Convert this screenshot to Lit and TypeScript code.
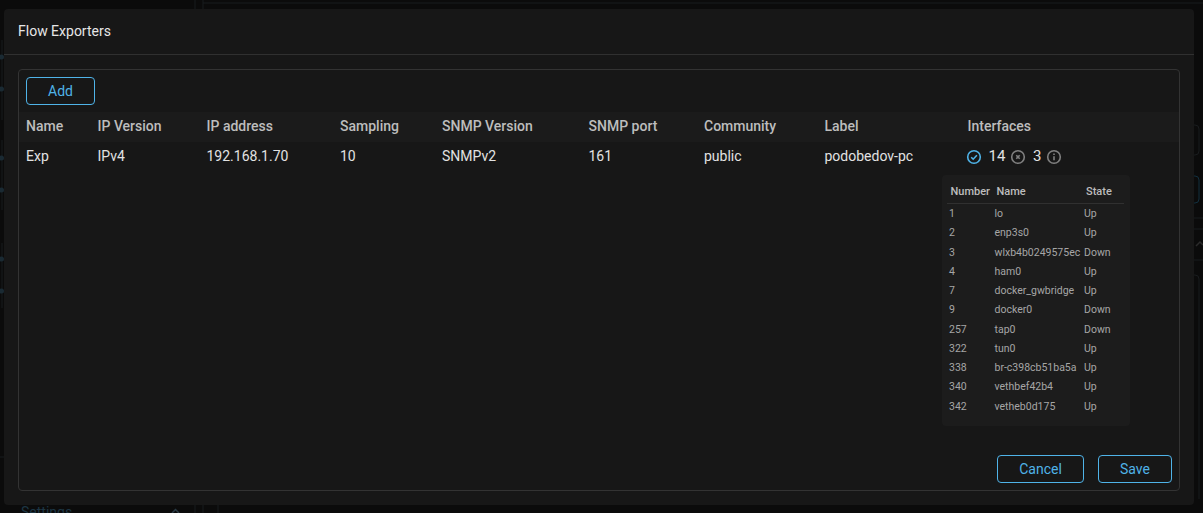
import { LitElement, html, css, svg } from "lit";
import { customElement } from "lit/decorators.js";

const HEAD = ["Name", "IP Version", "IP address", "Sampling", "SNMP Version", "SNMP port", "Community", "Label", "Interfaces"];
const ROW = ["Exp", "IPv4", "192.168.1.70", "10", "SNMPv2", "161", "public", "podobedov-pc"];
const IFS = [
  ["1", "lo", "Up"],
  ["2", "enp3s0", "Up"],
  ["3", "wlxb4b0249575ec", "Down"],
  ["4", "ham0", "Up"],
  ["7", "docker_gwbridge", "Up"],
  ["9", "docker0", "Down"],
  ["257", "tap0", "Down"],
  ["322", "tun0", "Up"],
  ["338", "br-c398cb51ba5a", "Up"],
  ["340", "vethbef42b4", "Up"],
  ["342", "vetheb0d175", "Up"],
];

const backdrop = svg`
  <g fill="none" stroke="#191c1e" stroke-width="1">
    <path d="M2 40v80M2 140v70M2 243v65M0 457h4"/>
    <path d="M195 0v9M203 0v9M203 3H1203M195 505v8M203 505v8M218 505v8"/>
    <path d="M1194 125h1a4 4 0 0 1 4 4v22a4 4 0 0 1-4 4h-1"/>
    <path d="M1194 218h9M1194 229h9M1194 260h9M1194 275h1a4 4 0 0 1 4 4v220"/>
  </g>
  <g fill="#1a2a33">
    <circle cx="1.5" cy="57" r="2.5"/><circle cx="1.5" cy="89" r="2.5"/>
    <circle cx="1.5" cy="158" r="2.5"/><circle cx="1.5" cy="190" r="2.5"/>
    <circle cx="1.5" cy="259" r="2.5"/><circle cx="1.5" cy="291" r="2.5"/>
  </g>
  <path d="M1194 176h1a4 4 0 0 1 4 4v19a4 4 0 0 1-4 4h-1" fill="none" stroke="#12303f"/>
  <path d="M1196 246l4-4 3 3" fill="none" stroke="#2b2b2b" stroke-width="1.5"/>
  <path d="M172 513l3.5-3.5 3.5 3.5" fill="none" stroke="#2a3a44" stroke-width="1.5"/>
`;

@customElement("app-root")
export class AppRoot extends LitElement {
  static styles = css`
    :host { display: block; width: 1203px; height: 513px; overflow: hidden; position: relative; background: #0b0b0b; font-family: Roboto, sans-serif; }
    .bd { position: absolute; inset: 0; display: block; }
    .ghost { position: absolute; left: 21px; top: 504px; color: #1d3644; font-size: 14px; }
    .modal { position: absolute; left: 4px; top: 9px; width: 1190px; height: 496px; box-sizing: border-box; background: #171717; border-radius: 4px; display: flex; flex-direction: column; }
    .title { height: 46px; box-sizing: border-box; border-bottom: 1px solid #303030; padding: 13px 14px 0; font-size: 14px; line-height: 18px; color: #e6e6e6; flex: none; }
    .body { flex: 1; margin: 14px 14px 14px 14px; border: 1px solid #333; border-radius: 4px; display: flex; flex-direction: column; min-height: 0; }
    .top { padding: 7px 7px 0; height: 35px; flex: none; }
    button { box-sizing: border-box; background: transparent; border: 1px solid #4fb3e8; border-radius: 4px; color: #4fb3e8; font: 14px Roboto, sans-serif; height: 28px; padding: 0; }
    .add { width: 69px; display: block; }
    .grid { display: grid; grid-template-columns: 71.5px 109px 133.5px 102px 146.5px 115.5px 120.5px 143px 1fr; padding-left: 7px; }
    .h { height: 30px; line-height: 29px; font-size: 14px; font-weight: 500; color: #bdbdbd; }
    .c { height: 30px; line-height: 29px; font-size: 14px; color: #e2e2e2; }
    .hbar { background: #1b1b1b; grid-column: 1 / -1; margin-left: -7px; padding-left: 7px; display: grid; grid-template-columns: subgrid; }
    .status { display: flex; align-items: center; margin-left: -2px; height: 29px; }
    .status svg { display: block; flex: none; }
    .n { margin: 0 4.5px 0 7px; font-size: 15px; }
    .pop { width: 188px; margin: 3px 0 0 -26px; background: #1c1c1c; border-radius: 4px; box-sizing: border-box; height: 251px; padding: 6px 6px 0 5px; }
    table { border-collapse: collapse; table-layout: fixed; width: 177px; font-size: 10.5px; }
    th { font-weight: 500; font-size: 11px; color: #bdbdbd; text-align: left; height: 20px; border-bottom: 1px solid #303030; padding: 0 0 2px 4px; white-space: nowrap; }
    td { color: #a6a6a6; height: 19.25px; padding: 0 0 0 2px; white-space: nowrap; }
    td:first-child { padding-left: 2.5px; }
    .foot { margin-top: auto; display: flex; justify-content: flex-end; gap: 14px; padding: 0 7px 7px 0; flex: none; }
    .cancel { width: 87px; }
    .save { width: 74px; }
    .rows { flex: 1; min-height: 0; }
  `;

  render() {
    return html`
      <svg class="bd" width="1203" height="513" viewBox="0 0 1203 513">${backdrop}</svg>
      <div class="ghost">Settings</div>
      <div class="modal">
        <div class="title">Flow Exporters</div>
        <div class="body">
          <div class="top"><button class="add">Add</button></div>
          <div class="rows">
            <div class="grid">
              <div class="hbar">${HEAD.map((h) => html`<div class="h">${h}</div>`)}</div>
              ${ROW.map((c) => html`<div class="c">${c}</div>`)}
              <div class="c status">
                <svg width="16" height="16" viewBox="0 0 16 16" fill="none" stroke="#4fb3e8" stroke-width="1.6"><circle cx="8" cy="8" r="6.3"/><path d="M5.2 8.2l2 2 3.7-4"/></svg>
                <span class="n">14</span>
                <svg width="16" height="16" viewBox="0 0 16 16" fill="none" stroke="#808080" stroke-width="1.6"><circle cx="8" cy="8" r="6.3"/><path d="M6.3 6.3l3.4 3.4M9.7 6.3l-3.4 3.4"/></svg>
                <span class="n">3</span>
                <svg width="16" height="16" viewBox="0 0 16 16" fill="none" stroke="#808080" stroke-width="1.6"><circle cx="8" cy="8" r="6.3"/><path d="M8 7.2v4M8 4.4v1.5"/></svg>
              </div>
              <div style="grid-column: 1 / 9"></div>
              <div class="pop">
                <table>
                  <colgroup><col style="width:46px"/><col style="width:89.5px"/><col style="width:41.5px"/></colgroup>
                  <thead><tr><th>Number</th><th>Name</th><th>State</th></tr></thead>
                  <tbody>${IFS.map((r) => html`<tr>${r.map((v) => html`<td>${v}</td>`)}</tr>`)}</tbody>
                </table>
              </div>
            </div>
          </div>
          <div class="foot"><button class="cancel">Cancel</button><button class="save">Save</button></div>
        </div>
      </div>
    `;
  }
}
